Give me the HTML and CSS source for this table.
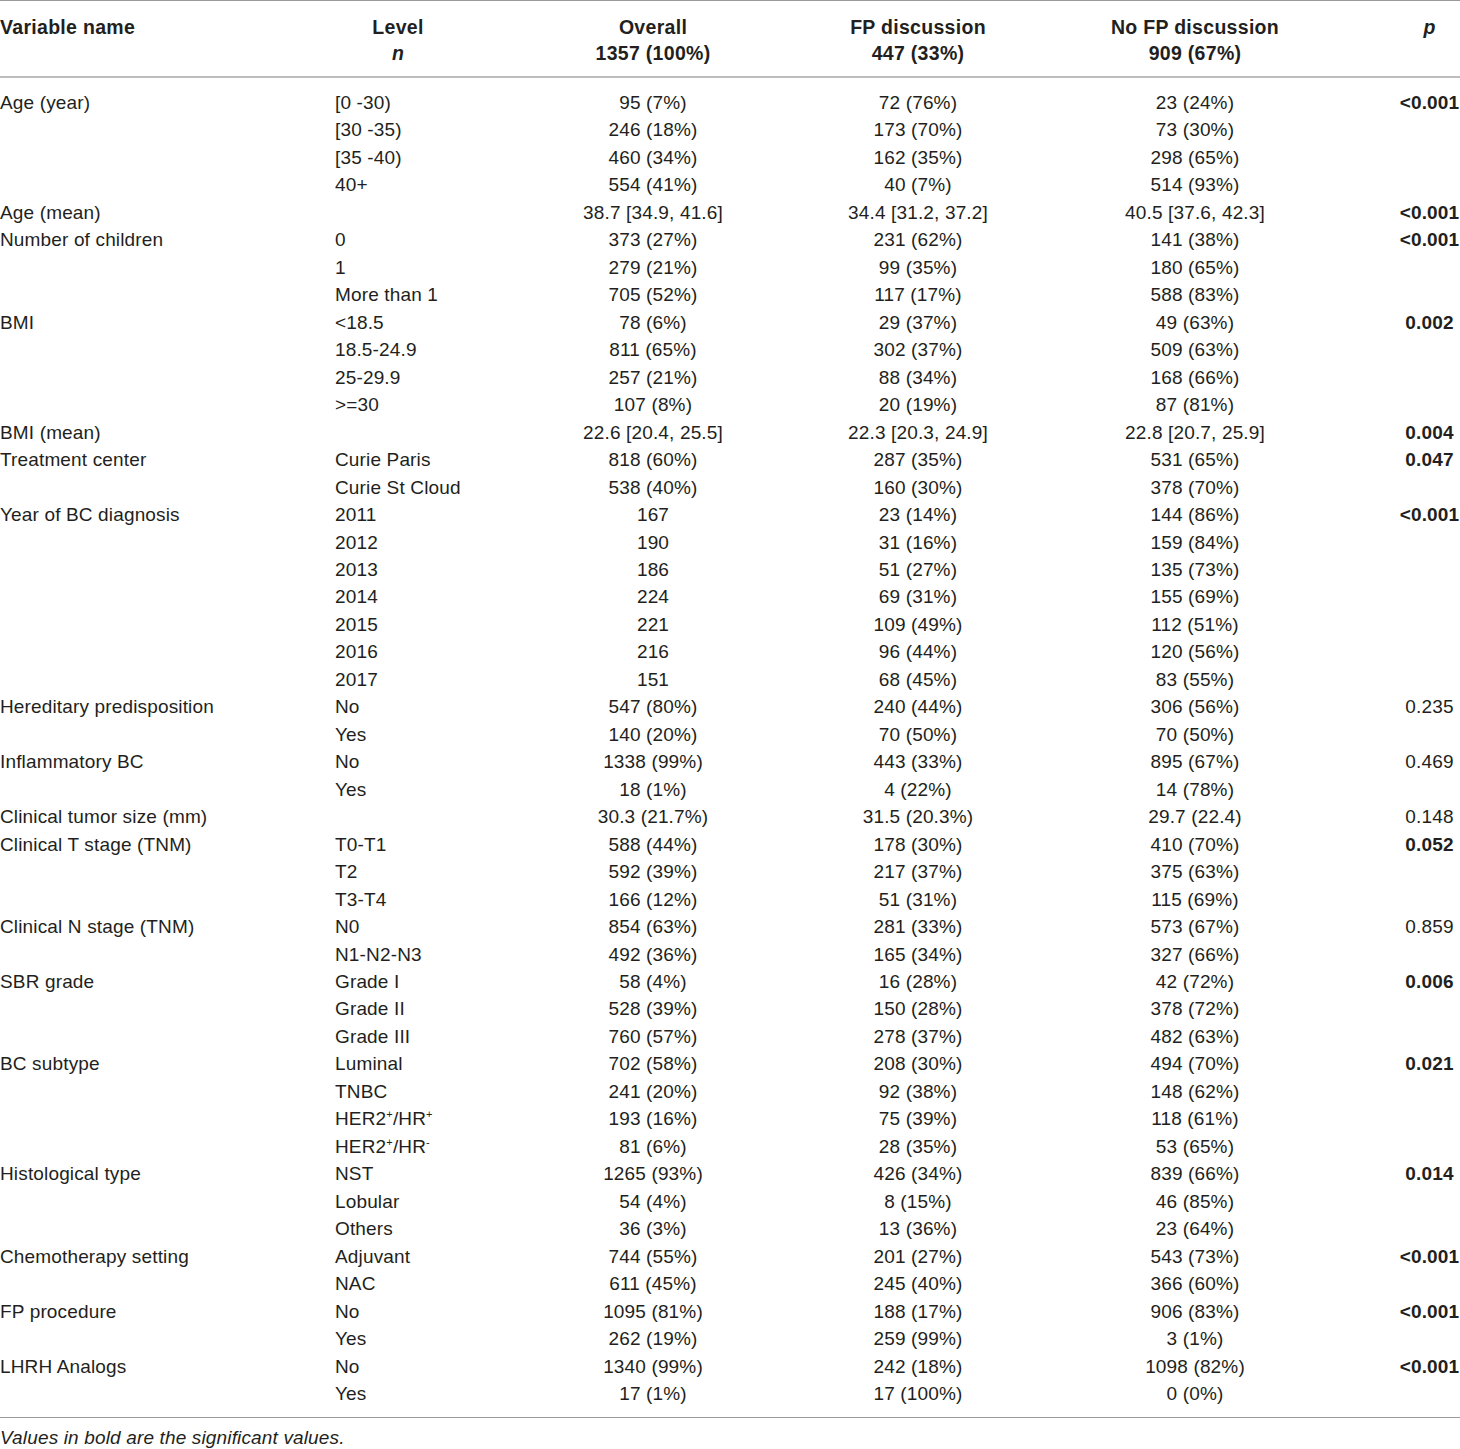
FILE: index.html
```html
<!DOCTYPE html>
<html>
<head>
<meta charset="utf-8">
<link rel="stylesheet" href="styles.css">
</head>
<body>
<table class="tbl">
<colgroup>
<col class="c1"><col class="c2"><col class="c3"><col class="c4"><col class="c5"><col class="c6">
</colgroup>
<thead>
<tr>
<th class="left">Variable name</th>
<th>Level<br><i>n</i></th>
<th>Overall<br>1357 (100%)</th>
<th>FP discussion<br>447 (33%)</th>
<th>No FP discussion<br>909 (67%)</th>
<th class="pcol"><i>p</i></th>
</tr>
</thead>
<tbody>
<tr class="first"><td>Age (year)</td><td>[0 -30)</td><td>95 (7%)</td><td>72 (76%)</td><td>23 (24%)</td><td class="p b">&lt;0.001</td></tr>
<tr><td></td><td>[30 -35)</td><td>246 (18%)</td><td>173 (70%)</td><td>73 (30%)</td><td class="p"></td></tr>
<tr><td></td><td>[35 -40)</td><td>460 (34%)</td><td>162 (35%)</td><td>298 (65%)</td><td class="p"></td></tr>
<tr><td></td><td>40+</td><td>554 (41%)</td><td>40 (7%)</td><td>514 (93%)</td><td class="p"></td></tr>
<tr><td>Age (mean)</td><td></td><td>38.7 [34.9, 41.6]</td><td>34.4 [31.2, 37.2]</td><td>40.5 [37.6, 42.3]</td><td class="p b">&lt;0.001</td></tr>
<tr><td>Number of children</td><td>0</td><td>373 (27%)</td><td>231 (62%)</td><td>141 (38%)</td><td class="p b">&lt;0.001</td></tr>
<tr><td></td><td>1</td><td>279 (21%)</td><td>99 (35%)</td><td>180 (65%)</td><td class="p"></td></tr>
<tr><td></td><td>More than 1</td><td>705 (52%)</td><td>117 (17%)</td><td>588 (83%)</td><td class="p"></td></tr>
<tr><td>BMI</td><td>&lt;18.5</td><td>78 (6%)</td><td>29 (37%)</td><td>49 (63%)</td><td class="p b">0.002</td></tr>
<tr><td></td><td>18.5-24.9</td><td>811 (65%)</td><td>302 (37%)</td><td>509 (63%)</td><td class="p"></td></tr>
<tr><td></td><td>25-29.9</td><td>257 (21%)</td><td>88 (34%)</td><td>168 (66%)</td><td class="p"></td></tr>
<tr><td></td><td>&gt;=30</td><td>107 (8%)</td><td>20 (19%)</td><td>87 (81%)</td><td class="p"></td></tr>
<tr><td>BMI (mean)</td><td></td><td>22.6 [20.4, 25.5]</td><td>22.3 [20.3, 24.9]</td><td>22.8 [20.7, 25.9]</td><td class="p b">0.004</td></tr>
<tr><td>Treatment center</td><td>Curie Paris</td><td>818 (60%)</td><td>287 (35%)</td><td>531 (65%)</td><td class="p b">0.047</td></tr>
<tr><td></td><td>Curie St Cloud</td><td>538 (40%)</td><td>160 (30%)</td><td>378 (70%)</td><td class="p"></td></tr>
<tr><td>Year of BC diagnosis</td><td>2011</td><td>167</td><td>23 (14%)</td><td>144 (86%)</td><td class="p b">&lt;0.001</td></tr>
<tr><td></td><td>2012</td><td>190</td><td>31 (16%)</td><td>159 (84%)</td><td class="p"></td></tr>
<tr><td></td><td>2013</td><td>186</td><td>51 (27%)</td><td>135 (73%)</td><td class="p"></td></tr>
<tr><td></td><td>2014</td><td>224</td><td>69 (31%)</td><td>155 (69%)</td><td class="p"></td></tr>
<tr><td></td><td>2015</td><td>221</td><td>109 (49%)</td><td>112 (51%)</td><td class="p"></td></tr>
<tr><td></td><td>2016</td><td>216</td><td>96 (44%)</td><td>120 (56%)</td><td class="p"></td></tr>
<tr><td></td><td>2017</td><td>151</td><td>68 (45%)</td><td>83 (55%)</td><td class="p"></td></tr>
<tr><td>Hereditary predisposition</td><td>No</td><td>547 (80%)</td><td>240 (44%)</td><td>306 (56%)</td><td class="p">0.235</td></tr>
<tr><td></td><td>Yes</td><td>140 (20%)</td><td>70 (50%)</td><td>70 (50%)</td><td class="p"></td></tr>
<tr><td>Inflammatory BC</td><td>No</td><td>1338 (99%)</td><td>443 (33%)</td><td>895 (67%)</td><td class="p">0.469</td></tr>
<tr><td></td><td>Yes</td><td>18 (1%)</td><td>4 (22%)</td><td>14 (78%)</td><td class="p"></td></tr>
<tr><td>Clinical tumor size (mm)</td><td></td><td>30.3 (21.7%)</td><td>31.5 (20.3%)</td><td>29.7 (22.4)</td><td class="p">0.148</td></tr>
<tr><td>Clinical T stage (TNM)</td><td>T0-T1</td><td>588 (44%)</td><td>178 (30%)</td><td>410 (70%)</td><td class="p b">0.052</td></tr>
<tr><td></td><td>T2</td><td>592 (39%)</td><td>217 (37%)</td><td>375 (63%)</td><td class="p"></td></tr>
<tr><td></td><td>T3-T4</td><td>166 (12%)</td><td>51 (31%)</td><td>115 (69%)</td><td class="p"></td></tr>
<tr><td>Clinical N stage (TNM)</td><td>N0</td><td>854 (63%)</td><td>281 (33%)</td><td>573 (67%)</td><td class="p">0.859</td></tr>
<tr><td></td><td>N1-N2-N3</td><td>492 (36%)</td><td>165 (34%)</td><td>327 (66%)</td><td class="p"></td></tr>
<tr><td>SBR grade</td><td>Grade I</td><td>58 (4%)</td><td>16 (28%)</td><td>42 (72%)</td><td class="p b">0.006</td></tr>
<tr><td></td><td>Grade II</td><td>528 (39%)</td><td>150 (28%)</td><td>378 (72%)</td><td class="p"></td></tr>
<tr><td></td><td>Grade III</td><td>760 (57%)</td><td>278 (37%)</td><td>482 (63%)</td><td class="p"></td></tr>
<tr><td>BC subtype</td><td>Luminal</td><td>702 (58%)</td><td>208 (30%)</td><td>494 (70%)</td><td class="p b">0.021</td></tr>
<tr><td></td><td>TNBC</td><td>241 (20%)</td><td>92 (38%)</td><td>148 (62%)</td><td class="p"></td></tr>
<tr><td></td><td>HER2<sup>+</sup>/HR<sup>+</sup></td><td>193 (16%)</td><td>75 (39%)</td><td>118 (61%)</td><td class="p"></td></tr>
<tr><td></td><td>HER2<sup>+</sup>/HR<sup>-</sup></td><td>81 (6%)</td><td>28 (35%)</td><td>53 (65%)</td><td class="p"></td></tr>
<tr><td>Histological type</td><td>NST</td><td>1265 (93%)</td><td>426 (34%)</td><td>839 (66%)</td><td class="p b">0.014</td></tr>
<tr><td></td><td>Lobular</td><td>54 (4%)</td><td>8 (15%)</td><td>46 (85%)</td><td class="p"></td></tr>
<tr><td></td><td>Others</td><td>36 (3%)</td><td>13 (36%)</td><td>23 (64%)</td><td class="p"></td></tr>
<tr><td>Chemotherapy setting</td><td>Adjuvant</td><td>744 (55%)</td><td>201 (27%)</td><td>543 (73%)</td><td class="p b">&lt;0.001</td></tr>
<tr><td></td><td>NAC</td><td>611 (45%)</td><td>245 (40%)</td><td>366 (60%)</td><td class="p"></td></tr>
<tr><td>FP procedure</td><td>No</td><td>1095 (81%)</td><td>188 (17%)</td><td>906 (83%)</td><td class="p b">&lt;0.001</td></tr>
<tr><td></td><td>Yes</td><td>262 (19%)</td><td>259 (99%)</td><td>3 (1%)</td><td class="p"></td></tr>
<tr><td>LHRH Analogs</td><td>No</td><td>1340 (99%)</td><td>242 (18%)</td><td>1098 (82%)</td><td class="p b">&lt;0.001</td></tr>
<tr class="last"><td></td><td>Yes</td><td>17 (1%)</td><td>17 (100%)</td><td>0 (0%)</td><td class="p"></td></tr>
</tbody>
</table>
<p class="note">Values in bold are the significant values.</p>
</body>
</html>
```

FILE: styles.css
```css
html, body {
  margin: 0;
  padding: 0;
  background: #ffffff;
}
body {
  font-family: "Liberation Sans", Arial, sans-serif;
  font-size: 19px;
  letter-spacing: 0.15px;
  color: #231f20;
}
.tbl {
  width: 1460px;
  table-layout: fixed;
  border-collapse: collapse;
  border-spacing: 0;
}
.c1 { width: 335px; }
.c2 { width: 126px; }
.c3 { width: 384px; }
.c4 { width: 146px; }
.c5 { width: 408px; }
.c6 { width: 61px; }

.tbl thead tr {
  border-top: 1px solid #9a9a9a;
  border-bottom: 2px solid #bdbdbd;
}
.tbl th {
  font-weight: bold;
  font-size: 19.5px;
  letter-spacing: 0.3px;
  text-align: center;
  line-height: 26px;
  padding: 13px 0 10px 0;
  vertical-align: top;
  white-space: nowrap;
}
.tbl th.left {
  text-align: left;
}
.tbl th.pcol {
  text-align: center;
}
.tbl td {
  padding: 0;
  line-height: 27.47px;
  height: 27.47px;
  text-align: center;
  vertical-align: middle;
  white-space: nowrap;
}
.tbl td:first-child,
.tbl td:nth-child(2) {
  text-align: left;
}
.tbl td.p {
  text-align: center;
}
.tbl td.b {
  font-weight: bold;
}
.tbl tr.first td {
  padding-top: 11px;
}
.tbl tr.last td {
  padding-bottom: 9px;
}
.tbl tbody tr.last {
  border-bottom: 1px solid #9a9a9a;
}
sup {
  font-size: 11px;
  line-height: 0;
  vertical-align: 7px;
}
.note {
  margin: 6px 0 0 0;
  font-style: italic;
  line-height: 27px;
}
```
